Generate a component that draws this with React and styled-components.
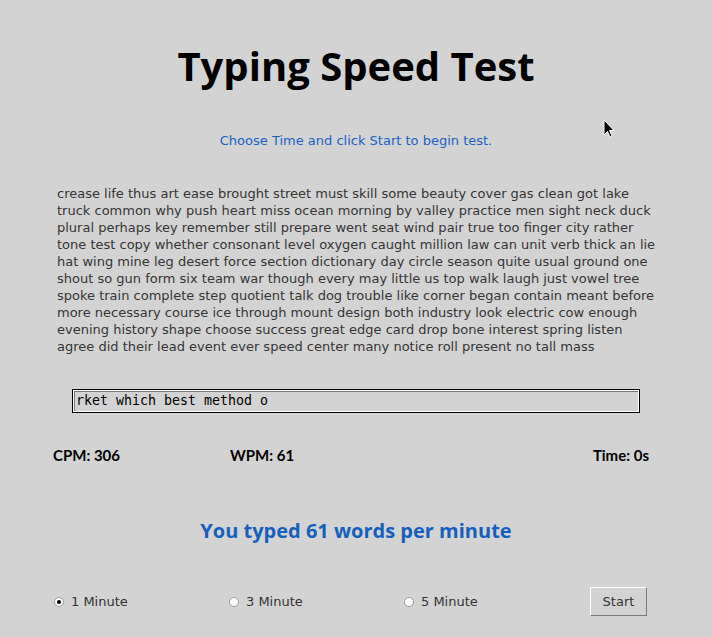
import React from "react";
import styled, { createGlobalStyle } from "styled-components";

const GlobalStyle = createGlobalStyle`
  html, body {
    margin: 0;
    background: #d3d3d3;
  }
`;

const Window = styled.div`
  position: relative;
  width: 712px;
  height: 637px;
  background: #d3d3d3;
  display: flex;
  flex-direction: column;
  align-items: center;
  overflow: hidden;
`;

const Title = styled.h1`
  margin: 40px 0 0;
  font-family: "Open Sans", "DejaVu Sans", sans-serif;
  font-weight: 700;
  font-size: 40px;
  line-height: 52px;
  color: #000;
`;

const Hint = styled.p`
  margin: 40px 0 0;
  font-family: "DejaVu Sans", sans-serif;
  font-size: 13px;
  line-height: 18px;
  color: #1a62c4;
`;

const Passage = styled.p`
  align-self: stretch;
  margin: 35px 0 0;
  padding: 0 57px;
  font-family: "DejaVu Sans", sans-serif;
  font-size: 13px;
  line-height: 17px;
  color: #353535;
  white-space: nowrap;
`;

const Entry = styled.div`
  margin-top: 34px;
  width: 563px;
  height: 20px;
  border: 1px solid #000;
  box-shadow: inset 1px 1px 0 #fff, inset -1px -1px 0 #fff, inset 2px 2px 0 #7a7a7a;
  padding: 1px 0 1px 3px;
  font-family: "DejaVu Sans Mono", monospace;
  font-size: 13.3px;
  line-height: 20px;
  color: #000;
  white-space: pre;
`;

const StatsRow = styled.div`
  align-self: stretch;
  display: flex;
  align-items: center;
  margin-top: 32px;
  padding: 0 63px 0 53px;
`;

const Stat = styled.span`
  font-family: "Lato", "Open Sans", sans-serif;
  font-weight: 700;
  font-size: 15px;
  line-height: 20px;
  color: #000;
  width: ${(p) => p.$width || "auto"};
  margin-left: ${(p) => (p.$push ? "auto" : "0")};
`;

const Result = styled.h2`
  margin: 52px 0 0;
  font-family: "Open Sans", "DejaVu Sans", sans-serif;
  font-weight: 700;
  font-size: 20px;
  line-height: 28px;
  color: #1560bd;
`;

const ControlRow = styled.div`
  align-self: stretch;
  display: flex;
  align-items: center;
  margin-top: 42px;
  padding: 0 65px 0 54px;
`;

const RadioOption = styled.label`
  display: flex;
  align-items: center;
  gap: 7px;
  width: ${(p) => p.$width};
  font-family: "DejaVu Sans", sans-serif;
  font-size: 13px;
  color: #333;
`;

const RadioDot = styled.span`
  position: relative;
  width: 10px;
  height: 10px;
  border-radius: 50%;
  background: #fff;
  border: 1px solid #9a9a9a;
  box-sizing: border-box;

  &::after {
    content: "";
    display: ${(p) => (p.$checked ? "block" : "none")};
    position: absolute;
    left: 2px;
    top: 2px;
    width: 4px;
    height: 4px;
    border-radius: 50%;
    background: #000;
  }
`;

const StartButton = styled.button`
  margin-left: auto;
  width: 57px;
  height: 29px;
  background: #d3d3d3;
  border: 1px solid;
  border-color: #fff #7a7a7a #7a7a7a #fff;
  font-family: "DejaVu Sans", sans-serif;
  font-size: 13px;
  color: #333;
  padding: 0;
`;

const Pointer = styled.svg`
  position: absolute;
  left: 603px;
  top: 119px;
`;

function RadioChoice({ label, checked, width }) {
  return (
    <RadioOption $width={width}>
      <RadioDot $checked={checked} />
      {label}
    </RadioOption>
  );
}

const passage = [
  "crease life thus art ease brought street must skill some beauty cover gas clean got lake",
  "truck common why push heart miss ocean morning by valley practice men sight neck duck",
  "plural perhaps key remember still prepare went seat wind pair true too finger city rather",
  "tone test copy whether consonant level oxygen caught million law can unit verb thick an lie",
  "hat wing mine leg desert force section dictionary day circle season quite usual ground one",
  "shout so gun form six team war though every may little us top walk laugh just vowel tree",
  "spoke train complete step quotient talk dog trouble like corner began contain meant before",
  "more necessary course ice through mount design both industry look electric cow enough",
  "evening history shape choose success great edge card drop bone interest spring listen",
  "agree did their lead event ever speed center many notice roll present no tall mass",
];

export default function App() {
  return (
    <Window>
      <GlobalStyle />
      <Title>Typing Speed Test</Title>
      <Hint>Choose Time and click Start to begin test.</Hint>
      <Passage>
        {passage.map((line, i) => (
          <React.Fragment key={i}>
            {line}
            <br />
          </React.Fragment>
        ))}
      </Passage>
      <Entry>rket which best method o</Entry>
      <StatsRow>
        <Stat $width="177px">CPM: 306</Stat>
        <Stat>WPM: 61</Stat>
        <Stat $push>Time: 0s</Stat>
      </StatsRow>
      <Result>You typed 61 words per minute</Result>
      <ControlRow>
        <RadioChoice label="1 Minute" checked width="175px" />
        <RadioChoice label="3 Minute" width="175px" />
        <RadioChoice label="5 Minute" width="120px" />
        <StartButton>Start</StartButton>
      </ControlRow>
      <Pointer width="12" height="20" viewBox="0 0 12 20">
        <path d="M1 1 L1 16 L4.5 12.5 L7 18 L9 17 L6.5 11.5 L11 11.5 Z" fill="#000" stroke="#fff" strokeWidth="1" />
      </Pointer>
    </Window>
  );
}
